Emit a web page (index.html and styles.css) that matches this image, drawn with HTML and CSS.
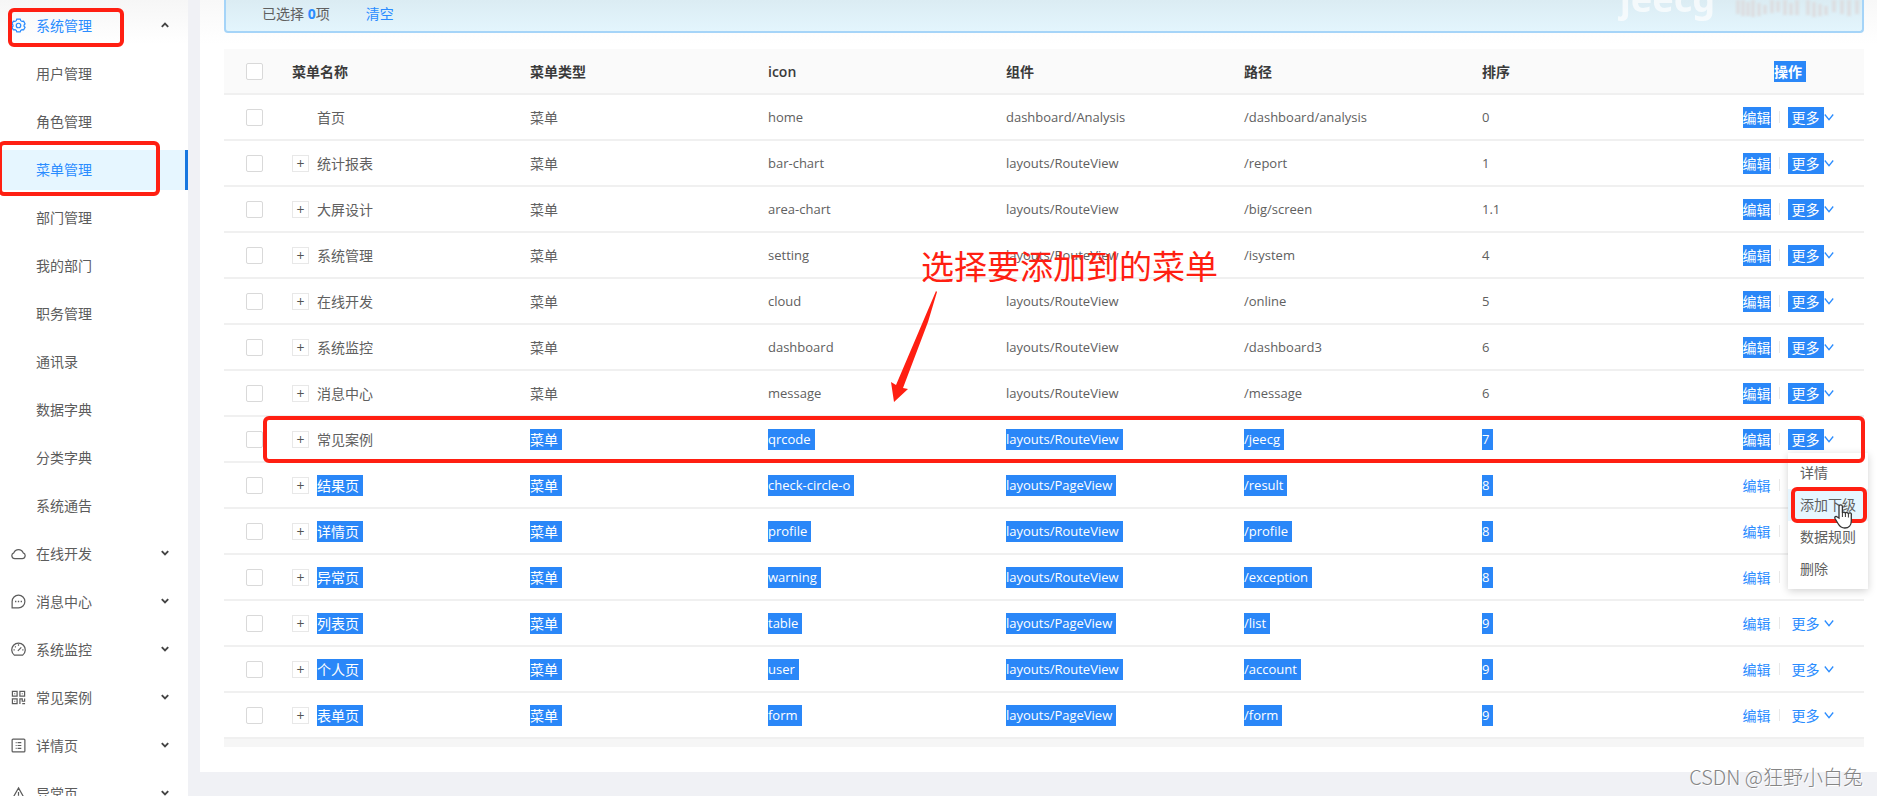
FILE: index.html
```html
<!DOCTYPE html>
<html lang="zh-CN">
<head>
  <meta charset="UTF-8">
  <meta name="viewport" content="width=device-width, initial-scale=1.0">
  <title>菜单管理</title>
  <link rel="stylesheet" href="styles.css">
</head>
<body>
  <svg class="sprite" aria-hidden="true">
    <symbol id="down" viewBox="0 0 10 10"><path d="M.8 2.5 5 7.7 9.200 2.500" fill="none" stroke="currentColor" stroke-width="1.300"/></symbol>
    <symbol id="caret" viewBox="0 0 10 10"><path d="M1.8 3.2 5 6.4 8.2 3.2" fill="none" stroke="currentColor" stroke-width="1.9"/></symbol>
  </svg>

  <div class="layout">
    <aside class="sidebar">
      <nav>
        <a href="#" class="item open">
          <svg class="icon" viewBox="0 0 16 16"><path d="M6.2 1.2h3.6l.6 1.7 1.3.8 1.8-.3 1.5 2.9-1.1 1.2v1.2l1.1 1.2-1.5 2.8-1.8-.3-1.3.8-.6 1.6H6.2l-.6-1.6-1.3-.8-1.8.3L1 9.9l1.1-1.2V7.5L1 6.3l1.5-2.9 1.8.3 1.3-.8z"/><circle cx="8" cy="8" r="2.4"/></svg>
          <span>系统管理</span>
          <svg class="caret up"><use href="#caret"/></svg>
          <i class="mark mark-group"></i>
        </a>
        <a href="#" class="item sub">用户管理</a>
        <a href="#" class="item sub">角色管理</a>
        <a href="#" class="item sub active">菜单管理<i class="mark mark-menu"></i></a>
        <a href="#" class="item sub">部门管理</a>
        <a href="#" class="item sub">我的部门</a>
        <a href="#" class="item sub">职务管理</a>
        <a href="#" class="item sub">通讯录</a>
        <a href="#" class="item sub">数据字典</a>
        <a href="#" class="item sub">分类字典</a>
        <a href="#" class="item sub">系统通告</a>
        <a href="#" class="item">
          <svg class="icon" viewBox="0 0 16 16"><path d="M4 13.500h8a3.200 3.200 0 0 0 1-6.200 5.300 5.300 0 0 0-10 0 3.200 3.200 0 0 0 1 6.200z"/></svg>
          <span>在线开发</span>
          <svg class="caret"><use href="#caret"/></svg>
        </a>
        <a href="#" class="item">
          <svg class="icon" viewBox="0 0 16 16"><path d="M1.2 14.800V8A6.800 6.800 0 1 1 8 14.800z"/><path d="M4.300 8h1.400M7.300 8h1.400M10.300 8h1.400" stroke-width="1.500"/></svg>
          <span>消息中心</span>
          <svg class="caret"><use href="#caret"/></svg>
        </a>
        <a href="#" class="item">
          <svg class="icon" viewBox="0 0 16 16"><path d="M3.500 14a7.200 7.200 0 1 1 9 0zM7.300 9.500 11 5.800M8 2.500V4M2.700 8.500H4M12 8.500h1.300M4.300 4.800l.8.8"/></svg>
          <span>系统监控</span>
          <svg class="caret"><use href="#caret"/></svg>
        </a>
        <a href="#" class="item">
          <svg class="icon" viewBox="0 0 16 16"><path d="M1.500 1.500h5v5h-5zM9.500 1.500h5v5h-5zM1.500 9.500h5v5h-5zM3.500 4h1M11.500 4h1M3.500 12h1M9.500 15V9.500H12V12h2.500V9M12 14.500h3"/></svg>
          <span>常见案例</span>
          <svg class="caret"><use href="#caret"/></svg>
        </a>
        <a href="#" class="item">
          <svg class="icon" viewBox="0 0 16 16"><rect x="1.200" y="1.200" width="13.600" height="13.600" rx="1"/><path d="M7 5h4M7 8h4M7 11h4M5 5h1M5 8h1M5 11h1"/></svg>
          <span>详情页</span>
          <svg class="caret"><use href="#caret"/></svg>
        </a>
        <a href="#" class="item">
          <svg class="icon" viewBox="0 0 16 16"><path d="M8 2 15 14.500H1zM8 6.500v4M8 12v1"/></svg>
          <span>异常页</span>
          <svg class="caret"><use href="#caret"/></svg>
        </a>
      </nav>
    </aside>

    <main class="content">
      <div class="panel">
        <div class="alert">
          <span>已选择 <b>0</b>项</span>
          <a href="#">清空</a>
          <span class="brand">jeecg</span>
          <svg class="smudge" viewBox="0 0 126 20"><path d="M2 0v14M7 0v16M12 2v14M17 0v17M23 3v13M29 5v9M36 0v13M42 1v11M49 0v15M55 3v12M61 0v15M72 0v15M78 2v15M84 4v12M90 6v9M98 0v12M106 0v14M113 0v16M121 0v14"/></svg>
        </div>
        <table>
          <colgroup><col class="col-check"><col span="6"><col class="col-action"></colgroup>
          <thead>
            <tr>
              <th><input type="checkbox" aria-label="全选"></th>
              <th>菜单名称</th>
              <th>菜单类型</th>
              <th>icon</th>
              <th>组件</th>
              <th>路径</th>
              <th>排序</th>
              <th><span class="sel">操作</span></th>
            </tr>
          </thead>
          <tbody id="rows"></tbody>
        </table>
        <div class="table-foot"></div>
      </div>
    </main>
  </div>

  <div class="note">选择要添加到的菜单</div>
  <svg class="arrow" viewBox="0 0 46 112"><path d="M45 0 46 1 37 31 12 97 17 98 3 111 0 91 5 94z" fill="#ff1f12"/></svg>
  <div class="credit">CSDN @狂野小白兔</div>

  <script src="script.js"></script>
</body>
</html>
```
FILE: styles.css
```css
* {
  box-sizing: border-box;
}

body {
  margin: 0;
  height: 100vh;
  overflow: hidden;
  position: relative;
  background: #f0f1f5;
  color: #606060;
  font: 14px/21px "Open Sans", "Noto Sans CJK SC", sans-serif;
}

a {
  color: #2a8cff;
  text-decoration: none;
}

.sprite {
  position: absolute;
  width: 0;
  height: 0;
}

.layout {
  display: flex;
  gap: 12px;
}

/* sidebar */
.sidebar {
  flex: 0 0 188px;
  height: 100vh;
  background: linear-gradient(#f6f6f6, #fff 44px);
}

nav {
  display: flex;
  flex-direction: column;
  gap: 8px;
  padding-top: 6px;
}

.item {
  position: relative;
  display: flex;
  flex-shrink: 0;
  align-items: center;
  height: 40px;
  padding: 0 18px 2px 11px;
  color: #5c5c5c;
}

.item.sub {
  padding-left: 36px;
}

.item.open,
.item.active {
  color: #2a8cff;
}

.item.active {
  background: #e6f6ff;
  border-right: 3px solid #1677e0;
}

.icon {
  width: 15px;
  height: 15px;
  margin-right: 10px;
  fill: none;
  stroke: currentColor;
  stroke-width: 1.3;
}

.caret {
  width: 10px;
  height: 10px;
  margin-left: auto;
  color: #444;
}

.caret.up {
  transform: rotate(180deg);
}

/* panel */
.content {
  flex: 1;
  min-width: 0;
}

.panel {
  padding: 0 13px 25px 24px;
  background: linear-gradient(#f8f8f8, #fff 44px);
}

.alert {
  position: relative;
  display: flex;
  gap: 36px;
  height: 33px;
  margin-bottom: 16px;
  padding: 3px 36px;
  border: 1px solid #a5d4f8;
  border-width: 0 2px 2px;
  border-radius: 0 0 4px 4px;
  background: linear-gradient(#dbecf3, #e3f5fd);
  overflow: hidden;
}

.alert b {
  color: #2a8cff;
}

.brand {
  position: absolute;
  right: 147px;
  top: -21px;
  color: #fff;
  font: bold 36px/40px "Noto Sans", sans-serif;
  opacity: 0.7;
}

.smudge {
  position: absolute;
  right: 0;
  top: 0;
  width: 126px;
  height: 20px;
  stroke: #dcdfe2;
  stroke-width: 4;
  filter: blur(1px);
}

table {
  width: 100%;
  border-collapse: collapse;
  table-layout: fixed;
}

.col-check {
  width: 60px;
}

.col-action {
  width: 152px;
}

th,
td {
  height: 46px;
  padding: 0 8px;
  border-bottom: 2px solid #f0f0f0;
  text-align: left;
  white-space: nowrap;
}

th {
  height: 45px;
  background: #fafafa;
  color: #3a3a3a;
  font-weight: 600;
}

th:first-child,
td:first-child,
th:last-child,
td:last-child {
  text-align: center;
}

td.latin {
  font-size: 13px;
}

input[type="checkbox"] {
  appearance: none;
  display: block;
  width: 17px;
  height: 17px;
  margin: 0 auto;
  border: 1px solid #d9d9d9;
  border-radius: 2px;
  background: #fff;
}

.name {
  display: flex;
  align-items: center;
  gap: 8px;
}

.expand {
  width: 17px;
  height: 17px;
  padding: 0;
  border: 1px solid #e8e8e8;
  background: #fff;
  color: #555;
  font: 14px/15px "Open Sans", sans-serif;
}

.expand.leaf {
  visibility: hidden;
}

.sel {
  display: inline-block;
  padding-right: 4px;
  background: #2a87f8;
  color: #fff;
}

th .sel {
  margin-left: 4px;
}

.actions {
  position: relative;
  display: flex;
  justify-content: center;
  align-items: center;
}

.actions .sel {
  padding-right: 0;
}

.actions .more {
  padding: 0 4px;
}

.actions i.split {
  width: 1px;
  height: 12px;
  margin: 0 8px;
  background: #e8e8e8;
}

.actions svg {
  width: 10px;
  height: 10px;
  color: #2a8cff;
}

.table-foot {
  height: 8px;
  background: #f6f6f6;
}

/* row dropdown */
.dropdown {
  position: absolute;
  z-index: 2;
  top: 24px;
  right: -12px;
  width: 80px;
  margin: 0;
  padding: 4px 0;
  list-style: none;
  text-align: left;
  background: #fff;
  box-shadow: 0 2px 8px rgba(0, 0, 0, 0.18);
}

.dropdown li {
  position: relative;
}

.dropdown a {
  display: block;
  padding: 5px 12px 6px;
  color: #606060;
}

.dropdown .hover {
  background: #e6f6ff;
}

.actions .pointer {
  position: absolute;
  z-index: 4;
  left: 45px;
  top: 14px;
  width: 20px;
  height: 26px;
}

/* red marks */
.mark {
  position: absolute;
  z-index: 3;
  border: 4px solid #ff1f12;
  border-radius: 6px;
  pointer-events: none;
}

.mark-group {
  left: 8px;
  top: 2px;
  width: 116px;
  height: 39px;
}

.mark-menu {
  left: -2px;
  top: -9px;
  width: 162px;
  height: 55px;
}

.mark-row {
  left: 39px;
  right: -1px;
  top: 0;
  height: 47px;
}

.mark-item {
  left: 3px;
  right: 1px;
  top: -2px;
  height: 36px;
}

tr.marked {
  position: relative;
}

.note {
  position: absolute;
  left: 921px;
  top: 243px;
  color: #ff1f12;
  font: 33px/44px "Noto Sans CJK SC", sans-serif;
}

.arrow {
  position: absolute;
  left: 891px;
  top: 291px;
  width: 46px;
  height: 112px;
}

.credit {
  position: absolute;
  right: 14px;
  bottom: 5px;
  color: #858585;
  font: 300 20px/28px "Noto Sans CJK SC", sans-serif;
  text-shadow: 1px 1px 0 #fff;
}
```
FILE: script.js
```js
// name, icon, component, path, sort
const menus = [
  ["首页", "home", "dashboard/Analysis", "/dashboard/analysis", "0"],
  ["统计报表", "bar-chart", "layouts/RouteView", "/report", "1"],
  ["大屏设计", "area-chart", "layouts/RouteView", "/big/screen", "1.1"],
  ["系统管理", "setting", "layouts/RouteView", "/isystem", "4"],
  ["在线开发", "cloud", "layouts/RouteView", "/online", "5"],
  ["系统监控", "dashboard", "layouts/RouteView", "/dashboard3", "6"],
  ["消息中心", "message", "layouts/RouteView", "/message", "6"],
  ["常见案例", "qrcode", "layouts/RouteView", "/jeecg", "7"],
  ["结果页", "check-circle-o", "layouts/PageView", "/result", "8"],
  ["详情页", "profile", "layouts/RouteView", "/profile", "8"],
  ["异常页", "warning", "layouts/RouteView", "/exception", "8"],
  ["列表页", "table", "layouts/PageView", "/list", "9"],
  ["个人页", "user", "layouts/RouteView", "/account", "9"],
  ["表单页", "form", "layouts/PageView", "/form", "9"]
];
const current = 7; // row with the open dropdown

const dropdown = `
  <ul class="dropdown">
    <li><a href="#">详情</a></li>
    <li><a href="#" class="hover">添加下级</a><i class="mark mark-item"></i>
      <svg class="pointer" viewBox="0 0 20 26"><path d="M6 15V3.5a1.7 1.7 0 0 1 3.4 0V10a1.6 1.6 0 0 1 3 .3 1.6 1.6 0 0 1 3 .7 1.5 1.5 0 0 1 2.9.8V18c0 4-2.5 7-6.5 7-3.5 0-5-1.5-6.5-4L2 15.5c-.8-1.7 1-2.700 2.300-1.500z" fill="#fff" stroke="#333" stroke-width="1.3"/><path d="M9.4 10v4M12.4 10.5V14M15.4 11v3.5" stroke="#333"/></svg>
    </li>
    <li><a href="#">数据规则</a></li>
    <li><a href="#">删除</a></li>
  </ul>`;

document.getElementById("rows").innerHTML = menus.map(([name, icon, comp, path, sort], i) => {
  const cell = (text) => i >= current ? `<span class="sel">${text}</span>` : text;
  const act = i <= current ? "sel" : "";
  return `<tr class="${i === current ? "marked" : ""}">
    <td><input type="checkbox" aria-label="${name}">${i === current ? '<i class="mark mark-row"></i>' : ""}</td>
    <td><div class="name"><button class="expand ${i ? "" : "leaf"}" aria-label="展开">+</button><span class="${i > current ? "sel" : ""}">${name}</span></div></td>
    <td>${cell("菜单")}</td>
    <td class="latin">${cell(icon)}</td>
    <td class="latin">${cell(comp)}</td>
    <td class="latin">${cell(path)}</td>
    <td class="latin">${cell(sort)}</td>
    <td><div class="actions"><a href="#" class="${act}">编辑</a><i class="split"></i><a href="#" class="more ${act}">更多</a><svg><use href="#down"/></svg>${i === current ? dropdown : ""}</div></td>
  </tr>`;
}).join("");
```
